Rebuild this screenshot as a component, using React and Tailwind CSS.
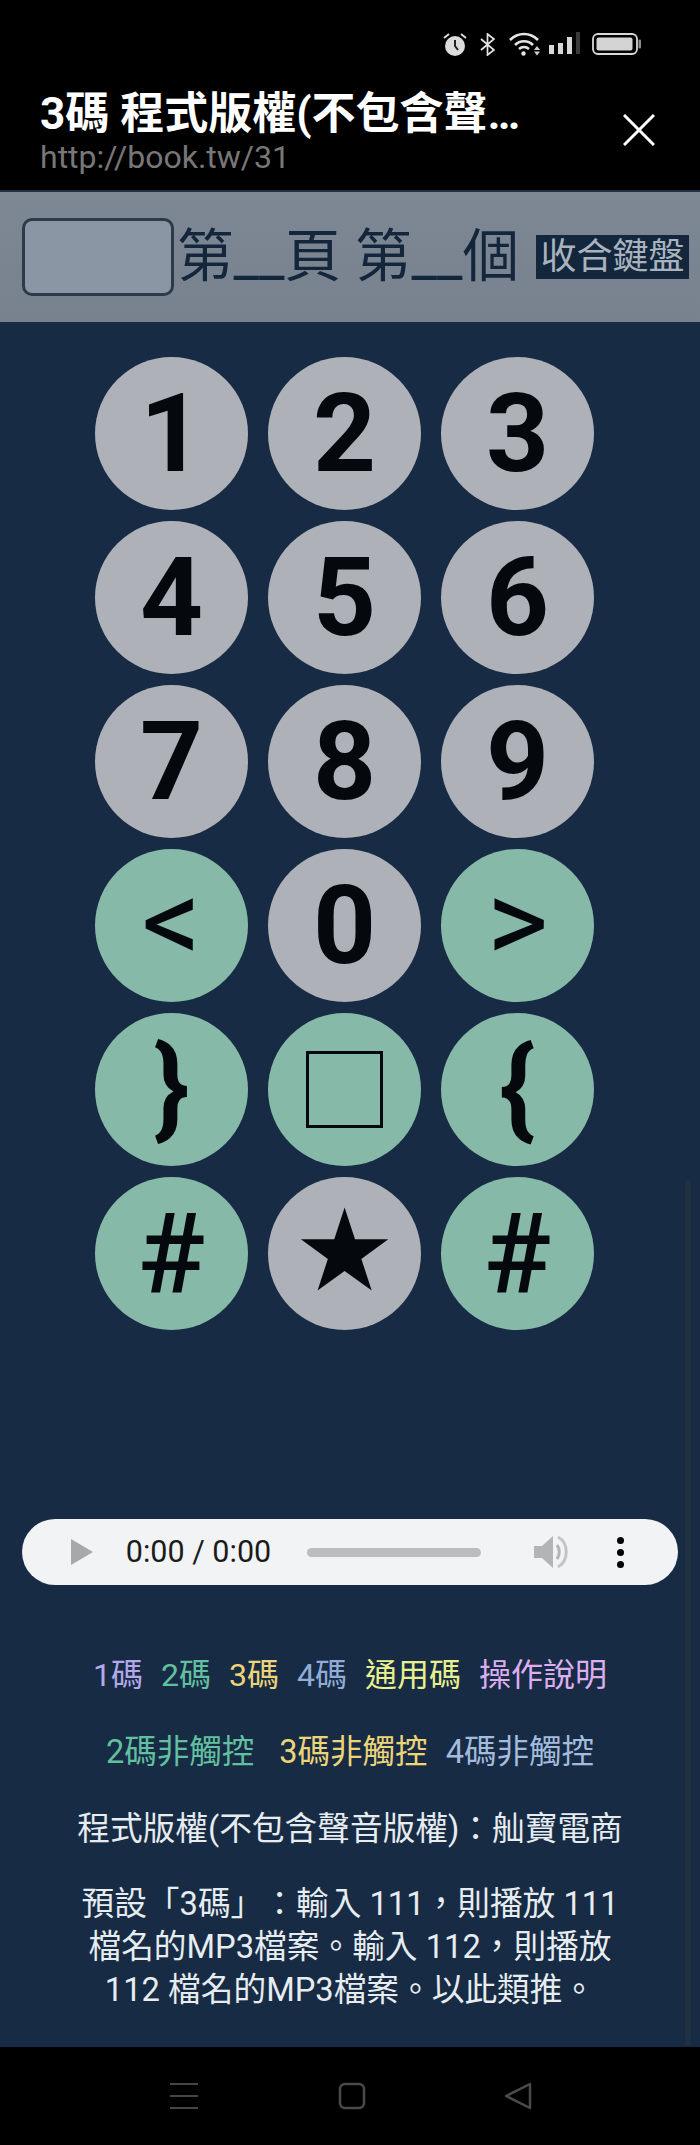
const keys = [
  { label: "1", tone: "gray" },
  { label: "2", tone: "gray" },
  { label: "3", tone: "gray" },
  { label: "4", tone: "gray" },
  { label: "5", tone: "gray" },
  { label: "6", tone: "gray" },
  { label: "7", tone: "gray" },
  { label: "8", tone: "gray" },
  { label: "9", tone: "gray" },
  { label: "<", tone: "green" },
  { label: "0", tone: "gray" },
  { label: ">", tone: "green" },
  { label: "}", tone: "green" },
  { label: "□", tone: "green" },
  { label: "{", tone: "green" },
  { label: "#", tone: "green" },
  { label: "★", tone: "gray" },
  { label: "#", tone: "green" },
];

const links = [
  { text: "1碼", color: "text-[#b5a8e8]" },
  { text: "2碼", color: "text-[#62c0a0]" },
  { text: "3碼", color: "text-[#ecd578]" },
  { text: "4碼", color: "text-[#92acd8]" },
  { text: "通用碼", color: "text-[#e8f08e]" },
  { text: "操作說明", color: "text-[#dcaef0]" },
];

function StatusIcons() {
  return (
    <div className="flex items-center justify-end pr-[59px] pt-[31px] h-[57px]">
      <svg width="24" height="24" viewBox="0 0 24 24" className="mr-[13px]">
        <circle cx="12" cy="14" r="10" fill="#dcdcdc" />
        <path d="M12 8v6l3 4" stroke="#222" strokeWidth="2" fill="none" />
        <path d="M1 6l5-4M23 6l-5-4" stroke="#dcdcdc" strokeWidth="2" />
      </svg>
      <svg width="15" height="23" viewBox="0 0 15 23" className="mr-[14px]">
        <path d="M1 6l13 11-6.500 5V1L14 6 1 17" stroke="#e4e4e4" strokeWidth="1.700" fill="none" />
      </svg>
      <svg width="32" height="24" viewBox="0 0 32 24" className="mr-[8px]">
        <path d="M1 8c8-8 20-8 28 0" stroke="#e4e4e4" strokeWidth="2.600" fill="none" />
        <path d="M6 13c5-5 13-5 18 0" stroke="#e4e4e4" strokeWidth="2.600" fill="none" />
        <path d="M10 17c3-2.500 7-2.500 10 0" stroke="#e4e4e4" strokeWidth="2.600" fill="none" />
        <circle cx="14.500" cy="21.500" r="2.200" fill="#e4e4e4" />
        <path d="M25 18l3-4 3 4zM25 19.500h6l-3 4z" fill="#cfcfcf" />
      </svg>
      <svg width="31" height="24" viewBox="0 0 31 24" className="mr-[12px]">
        <rect x="0" y="13" width="5" height="9" fill="#d8d8d8" />
        <rect x="9" y="11" width="5" height="11" fill="#d8d8d8" />
        <rect x="18" y="5" width="5" height="17" fill="#d8d8d8" />
        <rect x="27" y="0" width="4" height="22" fill="#3a3a3a" />
      </svg>
      <svg width="49" height="22" viewBox="0 0 49 22">
        <rect x="1" y="1" width="44" height="20" rx="5" stroke="#d8d8d8" strokeWidth="1.800" fill="none" />
        <rect x="4.500" y="4.500" width="36" height="13" rx="2" fill="#d4d4d4" />
        <rect x="46.500" y="6.500" width="2.500" height="9" rx="1" fill="#8c8c8c" />
      </svg>
    </div>
  );
}

function Key({ label, tone }) {
  const bg = tone === "green" ? "bg-[#87b9a9]" : "bg-[#aeb1b8]";
  let inner = label;
  if (label === "□") {
    inner = <span className="w-[77px] h-[77px] border-[3.500px] border-[#05080d]" aria-label="□" />;
  } else if (label === "★") {
    inner = <span className="text-[114px] font-normal font-['DejaVu_Sans'] -mt-[6px]">{label}</span>;
  } else if (label === "{" || label === "}") {
    inner = <span className="-mt-[4px]">{label}</span>;
  } else if (label === "<" || label === ">") {
    inner = <span className="text-[118px] font-normal -mt-[7px]">{label}</span>;
  } else if (label === "#") {
    inner = <span className="text-[112px] font-medium">{label}</span>;
  }
  return (
    <button className={`w-[153px] h-[153px] rounded-full flex items-center justify-center text-[110px] leading-none font-bold text-[#05080d] ${bg}`}>
      {inner}
    </button>
  );
}

function AudioBar() {
  return (
    <div className="mx-[22px] h-[66px] rounded-full bg-[#f1f3f4] flex items-center">
      <svg width="22" height="26" viewBox="0 0 22 26" className="ml-[49px]">
        <path d="M0 0l22 13L0 26z" fill="#a8a8a8" />
      </svg>
      <span className="ml-[32px] w-[147px] text-[30.500px] leading-none text-[#1b1b1b] whitespace-nowrap">0:00 / 0:00</span>
      <div className="ml-[35px] w-[174px] h-[9px] rounded-full bg-[#bdbdbd]" />
      <svg width="36" height="34" viewBox="0 0 36 34" className="ml-[53px]">
        <path d="M0 11h8L19 1v32L8 23H0z" fill="#b4b4b4" />
        <path d="M23 10c3 4 3 10 0 14" stroke="#b4b4b4" strokeWidth="3" fill="none" />
        <path d="M24 2c11 6 11 24 0 30" stroke="#c4c4c4" strokeWidth="3" fill="none" />
      </svg>
      <div className="ml-[47px] flex flex-col gap-[5px]">
        <span className="w-[7px] h-[7px] rounded-full bg-black" />
        <span className="w-[7px] h-[7px] rounded-full bg-black" />
        <span className="w-[7px] h-[7px] rounded-full bg-black" />
      </div>
    </div>
  );
}

export default function App() {
  return (
    <div lang="zh-TW" className="relative w-[700px] h-[2145px] flex flex-col overflow-hidden bg-[#172b44] [text-spacing-trim:space-all] font-['Roboto','Noto_Sans_CJK_TC',sans-serif]">
      <header className="h-[190px] shrink-0 bg-black">
        <StatusIcons />
        <div className="flex items-start justify-between pl-[40px] pr-[45px] pt-[29px]">
          <div>
            <h1 className="text-[44px] leading-[50px] mt-[3px] font-bold text-white whitespace-nowrap">3碼 程式版權(不包含聲…</h1>
            <p className="text-[32px] leading-[36px] text-[#777] whitespace-nowrap">http://book.tw/31</p>
          </div>
          <svg width="32" height="32" viewBox="0 0 32 32" className="mt-[28px]">
            <path d="M1 1l30 30M31 1L1 31" stroke="#fff" strokeWidth="3" />
          </svg>
        </div>
      </header>

      <div className="h-[132px] shrink-0 flex items-center pl-[22px] bg-gradient-to-b from-[#7d8894] to-[#77828e] border-t-2 border-[#223246]">
        <div className="w-[152px] h-[78px] rounded-[10px] border-[3px] border-[#2e3a4a] bg-[#8b96a5]" />
        <span className="ml-[3px] text-[56.500px] leading-none text-[#14263c] whitespace-nowrap">第__頁 第__個</span>
        <span className="ml-[17px] w-[153px] h-[44px] bg-[#14263c] text-[#a9b3bf] text-[36px] leading-[44px] text-center whitespace-nowrap">收合鍵盤</span>
      </div>

      <main className="flex-1 text-center">
        <div className="pt-[35px] pr-[11px]">
          <div className="grid grid-cols-[repeat(3,153px)] gap-x-[20px] gap-y-[11px] justify-center">
            {keys.map((k, i) => (
              <Key key={i} label={k.label} tone={k.tone} />
            ))}
          </div>
        </div>

        <div className="mt-[189px]">
          <AudioBar />
        </div>

        <nav className="mt-[70px] flex justify-center gap-[18px] text-[32px] leading-[40px] whitespace-nowrap">
          {links.map((l) => (
            <a key={l.text} className={l.color}>{l.text}</a>
          ))}
        </nav>
        <nav className="mt-[37px] flex justify-center text-[32.500px] leading-[40px] whitespace-nowrap">
          <a className="text-[#62c0a0] mr-[25px]">2碼非觸控</a>
          <a className="text-[#ecd578] mr-[18px]">3碼非觸控</a>
          <a className="text-[#a3bbdd]">4碼非觸控</a>
        </nav>
        <p className="mt-[37px] text-[32.700px] leading-[40px] text-[#e6ecef] whitespace-nowrap">程式版權(不包含聲音版權)：舢寶電商</p>
        <p className="mt-[34px] mx-auto w-[560px] text-[32.700px] leading-[43px] text-[#e6ecef]">
          預設「3碼」：輸入 111，則播放 111<br />檔名的MP3檔案。輸入 112，則播放<br />112 檔名的MP3檔案。以此類推。
        </p>
      </main>

      <footer className="h-[98px] shrink-0 bg-black flex items-center pl-[170px]">
        <svg width="28" height="28" viewBox="0 0 28 28">
          <path d="M0 2h28M0 14h28M0 26h28" stroke="#454545" strokeWidth="2" />
        </svg>
        <svg width="28" height="28" viewBox="0 0 28 28" className="ml-[140px]">
          <rect x="2" y="2" width="24" height="24" rx="5" stroke="#4a4a4a" strokeWidth="2.500" fill="none" />
        </svg>
        <svg width="28" height="28" viewBox="0 0 28 28" className="ml-[138px]">
          <path d="M26 2v24L2 14z" stroke="#4a4a4a" strokeWidth="2.500" strokeLinejoin="round" fill="none" />
        </svg>
      </footer>

      {/* overlay scrollbar */}
      <div className="absolute right-[9px] top-[1180px] w-[6px] h-[865px] bg-[#202f42]" />
    </div>
  );
}
